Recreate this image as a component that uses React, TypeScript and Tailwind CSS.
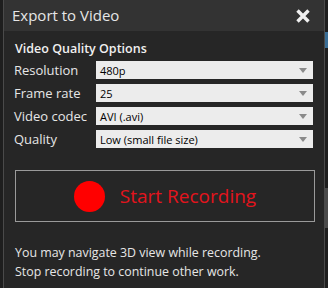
import React from 'react';

const rows = [
  { label: 'Resolution', value: '480p' },
  { label: 'Frame rate', value: '25' },
  { label: 'Video codec', value: 'AVI (.avi)' },
  { label: 'Quality', value: 'Low (small file size)' },
];

const App: React.FC = () => {
  return (
    <div className="w-[328px] h-[288px] bg-[#1e1e1e] flex overflow-hidden" style={{ fontFamily: '"Open Sans", "Noto Sans", sans-serif' }}>
      <div className="w-[3px] bg-[#1e1e1e]" />
      <div className="w-[322px] h-full flex flex-col border-l border-r border-[#4a4a4a] bg-[#262626]">
        {/* title bar */}
        <div className="h-[31px] bg-[#333333] flex items-center justify-between pl-[8px] pr-[14px]">
          <span className="text-[15px] text-[#e6e6e6]">Export to Video</span>
          <svg width="14" height="14" viewBox="0 0 14 14">
            <path d="M1.5 1.5 L12.5 12.5 M12.5 1.5 L1.5 12.5" stroke="#f0f0f0" strokeWidth="3.4" />
          </svg>
        </div>

        <div className="px-[9px] pt-[9px]">
          <div className="pl-[2px] text-[12.5px] font-semibold text-[#f0f0f0] leading-[18px]">Video Quality Options</div>
          <div className="mt-[3px] flex flex-col gap-[5px]">
            {rows.map(r => (
              <div key={r.label} className="flex items-center h-[18px]">
                <span className="w-[83px] pl-[1px] text-[13px] text-[#e6e6e6] leading-none">{r.label}</span>
                <div className="w-[217px] h-[18px] bg-[#ececec] flex items-center justify-between pl-[4px] pr-[6px]">
                  <span className="text-[11px] text-black leading-none">{r.value}</span>
                  <svg width="8" height="5" viewBox="0 0 8 5"><path d="M0 0 L8 0 L4 5 Z" fill="#8a8a8a" /></svg>
                </div>
              </div>
            ))}
          </div>

          <button className="mt-[22px] ml-[2px] w-[300px] h-[52px] border border-[#9a9a9a] flex items-center justify-center gap-[15px]">
            <span className="w-[31px] h-[31px] rounded-full bg-[#ff0000]" />
            <span className="text-[19px] text-[#e3141d]">Start Recording</span>
          </button>

          <div className="mt-[21px] ml-[2px] text-[12.4px] leading-[19px] text-[#e6e6e6]">
            <div>You may navigate 3D view while recording.</div>
            <div>Stop recording to continue other work.</div>
          </div>
        </div>
      </div>
      <div className="flex-1 flex flex-col">
        <div className="h-[32px]" />
        <div className="h-[16px] bg-[#3a6e96]" />
        <div className="h-[140px]" />
        <div className="h-[40px] bg-[#4a4a4a]" />
      </div>
    </div>
  );
};

export default App;
